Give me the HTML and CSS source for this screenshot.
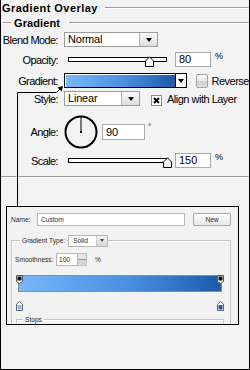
FILE: index.html
```html
<!DOCTYPE html>
<html lang="en">
<head>
  <meta charset="UTF-8">
  <title>Gradient Overlay</title>
  <link rel="stylesheet" href="styles.css">
</head>
<body>
  <div class="panel">
    <div class="title">Gradient Overlay</div>
    <div class="sub"><span>Gradient</span></div>

    <div class="row first">
      <span class="lbl">Blend Mode:</span>
      <div class="select wide"><span class="stext">Normal</span><span class="sbtn"><i class="tri"></i></span></div>
    </div>

    <div class="row gap5">
      <span class="lbl">Opacity:</span>
      <div class="slider">
        <div class="track"></div>
        <svg class="thumb" style="left: 77px" width="9" height="11" viewBox="0 0 9 11"><path d="M0.5 10.5V5L4.5 0.8L8.5 5V10.5Z" fill="#fff" stroke="#000"/></svg>
      </div>
      <div class="num">80</div>
      <span class="unit">%</span>
    </div>

    <div class="row gap6">
      <span class="lbl">Gradient:</span>
      <div class="gbar"><div class="gfill"></div><div class="garrow"><i class="tri"></i></div></div>
      <span class="check-mac"></span>
      <span class="ctext">Reverse</span>
    </div>

    <div class="row gap3">
      <span class="lbl">Style:</span>
      <div class="select narrow"><span class="stext">Linear</span><span class="sbtn"><i class="tri"></i></span></div>
      <svg class="check" width="11" height="11" viewBox="0 0 11 11"><rect x="0.5" y="0.5" width="10" height="10" fill="#fff" stroke="#8a8a8a"/><path d="M3 3L8 8M8 3L3 8" stroke="#000" stroke-width="2"/></svg>
      <span class="ctext align">Align with Layer</span>
    </div>

    <div class="row angle">
      <span class="lbl">Angle:</span>
      <svg class="dial" width="34" height="34" viewBox="0 0 34 34"><circle cx="17" cy="17" r="15.5" fill="none" stroke="#000" stroke-width="2"/><path d="M17 17V2" stroke="#000"/><rect x="16" y="16" width="2" height="2" fill="#000"/></svg>
      <div class="num deg">90</div>
      <span class="degsym">°</span>
    </div>

    <div class="row gap4">
      <span class="lbl">Scale:</span>
      <div class="slider">
        <div class="track"></div>
        <svg class="thumb" style="left: 95px" width="9" height="11" viewBox="0 0 9 11"><path d="M0.5 10.5V5L4.5 0.8L8.5 5V10.5Z" fill="#fff" stroke="#000"/></svg>
      </div>
      <div class="num">150</div>
      <span class="unit">%</span>
    </div>

    <div class="divider"></div>

    <div class="inset">
      <div class="irow">
        <span class="ilbl">Name:</span>
        <div class="iinput">Custom</div>
        <div class="ibtn">New</div>
      </div>

      <div class="grp">
        <div class="ghead">
          <span class="glbl">Gradient Type:</span>
          <div class="isel"><span class="stext">Solid</span><span class="ibtn-arrow"><i class="tri small"></i></span></div>
        </div>
        <div class="irow smooth">
          <span class="ilbl long">Smoothness:</span>
          <div class="iinput short">100</div>
          <span class="stepper"></span>
          <span class="iunit">%</span>
        </div>

        <div class="editor">
          <svg class="stop top" style="left: 0" width="7" height="9" viewBox="0 0 7 9"><path d="M0.5 0.5H6.5V6.5L3.5 8.5L0.5 6.5Z" fill="#fff" stroke="#555"/><rect x="1.5" y="1.5" width="4" height="4" fill="#111"/></svg>
          <svg class="stop top" style="left: 201px" width="7" height="9" viewBox="0 0 7 9"><path d="M0.5 0.5H6.5V6.5L3.5 8.5L0.5 6.5Z" fill="#fff" stroke="#555"/><rect x="1.5" y="1.5" width="4" height="4" fill="#111"/></svg>
          <div class="ebar"></div>
          <svg class="stop bottom" style="left: 0" width="7" height="10" viewBox="0 0 7 10"><path d="M0.5 9.5V3L3.5 0.5L6.5 3V9.5Z" fill="#fff" stroke="#666"/><rect x="1.5" y="4" width="4" height="4.5" fill="#7db7f5"/></svg>
          <svg class="stop bottom" style="left: 201px" width="7" height="10" viewBox="0 0 7 10"><path d="M0.5 9.5V3L3.5 0.5L6.5 3V9.5Z" fill="#fff" stroke="#666"/><rect x="1.5" y="4" width="4" height="4.5" fill="#1d5cb0"/></svg>
        </div>

        <div class="stops">
          <div class="ghead"><span class="glbl">Stops</span></div>
        </div>
      </div>
    </div>

    <svg class="callout" width="70" height="210" viewBox="0 0 70 210"><path d="M17.5 207V92.5H56.5L60 89" fill="none" stroke="#000"/><path d="M63 86L57.5 87.5L61.5 91.5Z" fill="#000"/></svg>
  </div>
</body>
</html>
```

FILE: styles.css
```css
* { box-sizing: border-box; }

body {
  margin: 0;
  background: #f3f3f3;
  font-family: "Liberation Sans", Arial, sans-serif;
  font-size: 11px;
  color: #000;
}

.panel {
  position: relative;
  width: 250px;
  height: 370px;
  border: 1px solid #000;
  border-top: none;
  background: #f3f3f3;
  overflow: hidden;
}

/* Headings */
.title {
  display: flex;
  align-items: center;
  height: 15px;
  padding-left: 1px;
  font-weight: bold;
  letter-spacing: 0.45px;
}

.title::after,
.sub::after,
.sub::before {
  content: "";
  flex: 1;
  border-top: 1px solid #9c9c9c;
  border-bottom: 1px solid #fff;
}

.title::after { margin-left: 7px; }

.sub {
  display: flex;
  align-items: center;
  height: 15px;
  font-weight: bold;
  letter-spacing: 0.1px;
}

.sub::before {
  flex: none;
  width: 8px;
  margin-left: 2px;
}

.sub span { margin-left: 3px; }
.sub::after { margin-left: 9px; }

/* Rows */
.row {
  display: flex;
  align-items: center;
  height: 15px;
}

.row.first { margin-top: 2px; }
.row.gap3 { margin-top: 3px; }
.row.gap4 { margin-top: 4px; }
.row.gap5 { margin-top: 5px; }
.row.gap6 { margin-top: 6px; }

.lbl {
  flex: none;
  width: 58px;
  padding-right: 1px;
  text-align: right;
  letter-spacing: -0.6px;
  white-space: nowrap;
}

.select {
  display: flex;
  height: 15px;
  margin-left: 5px;
  border: 1px solid #9c9c9c;
  background: #fff;
}

.select.wide { width: 94px; }
.select.narrow { width: 76px; }

.stext {
  flex: 1;
  padding-left: 3px;
  line-height: 13px;
  letter-spacing: -0.2px;
}

.sbtn {
  display: flex;
  align-items: center;
  justify-content: center;
  width: 18px;
  border-left: 1px solid #b4b4b4;
  background: linear-gradient(#fbfbfb, #dedede);
}

.tri {
  display: block;
  width: 0;
  height: 0;
  border-left: 3px solid transparent;
  border-right: 3px solid transparent;
  border-top: 4px solid #000;
}

.tri.small {
  border-left-width: 2px;
  border-right-width: 2px;
  border-top-width: 3px;
  border-top-color: #444;
}

/* Sliders */
.slider {
  position: relative;
  display: flex;
  align-items: center;
  width: 99px;
  height: 15px;
  margin-left: 9px;
}

.track {
  width: 100%;
  height: 5px;
  border: 1px solid #000;
  background: #fff;
}

.thumb {
  position: absolute;
  top: 4px;
}

.num {
  width: 36px;
  height: 15px;
  margin-left: 8px;
  padding-left: 3px;
  border: 1px solid #a4abb2;
  background: #fff;
  line-height: 13px;
}

.unit {
  margin-left: 4px;
  font-size: 9px;
  align-self: flex-start;
  margin-top: -1px;
}

/* Gradient preview */
.gbar {
  display: flex;
  width: 124px;
  height: 15px;
  margin-left: 5px;
  border: 1px solid #000;
  background: #fff;
}

.gfill {
  flex: 1;
  margin: 1px 0 0 1px;
  background: linear-gradient(to right, #79b7f9, #4a8ee0 55%, #1c5aaa);
}

.garrow {
  display: flex;
  align-items: center;
  justify-content: center;
  width: 11px;
  border-left: 1px solid #000;
}

.check-mac {
  width: 12px;
  height: 14px;
  margin-left: 9px;
  border: 1px solid #a2a2a2;
  border-radius: 2px;
  background: linear-gradient(#fdfdfd, #ececec 45%, #cfcfcf 55%, #e2e2e2);
}

.ctext {
  margin-left: 4px;
  letter-spacing: -0.5px;
}

.check {
  margin-left: 11px;
  margin-top: 3px;
}

.ctext.align { margin-left: 5px; }

/* Angle */
.row.angle {
  height: 34px;
  margin-top: 9px;
}

.dial { margin-left: 5px; }

.num.deg {
  width: 43px;
  height: 16px;
  margin-left: 4px;
  line-height: 14px;
}

.degsym {
  align-self: flex-start;
  margin: 7px 0 0 3px;
  font-size: 8px;
}

.divider {
  margin-top: 8px;
  border-top: 1px solid #9c9c9c;
  border-bottom: 1px solid #fff;
}

/* Gradient editor inset */
.inset {
  width: 233px;
  height: 119px;
  margin: 28px 0 0 5px;
  border: 1px solid #000;
  background: #f2f2f2;
  overflow: hidden;
  font-size: 6.6px;
  color: #2a2a2a;
}

.irow {
  display: flex;
  align-items: center;
  height: 13px;
  margin: 6px 0 0 4px;
}

.ilbl {
  flex: none;
  width: 26px;
}

.ilbl.long { width: 41px; }

.iinput {
  width: 148px;
  height: 13px;
  padding-left: 3px;
  border: 1px solid #b8b8b8;
  background: #fff;
  line-height: 11px;
}

.iinput.short {
  width: 22px;
  padding-left: 2px;
}

.ibtn {
  width: 38px;
  height: 13px;
  margin-left: 8px;
  border: 1px solid #a8a8a8;
  border-radius: 1px;
  background: linear-gradient(#fff, #e6e6e6);
  text-align: center;
  line-height: 11px;
}

.grp {
  width: 220px;
  height: 120px;
  margin: 14px 0 0 4px;
  border: 1px solid #c6c6c6;
  border-bottom: none;
  box-shadow: inset 1px 1px 0 #fff;
}

.ghead {
  display: flex;
  align-items: center;
  height: 13px;
  margin: -7px 0 0 8px;
}

.glbl {
  padding: 0 2px;
  background: #f2f2f2;
}

.isel {
  display: flex;
  width: 40px;
  height: 12px;
  margin-left: 1px;
  border: 1px solid #b8b8b8;
  background: #fff;
}

.isel .stext {
  padding-left: 4px;
  line-height: 10px;
  letter-spacing: 0;
}

.ibtn-arrow {
  display: flex;
  align-items: center;
  justify-content: center;
  width: 11px;
  border-left: 1px solid #c8c8c8;
  background: linear-gradient(#f6f6f6, #d8d8d8);
}

.grp .ghead .isel { margin-right: 2px; }

.smooth { margin: 6px 0 0 3px; }

.stepper {
  width: 9px;
  height: 13px;
  border: 1px solid #c0c0c0;
  border-left: none;
  background: linear-gradient(#e4e4e4 45%, #999 45%, #999 55%, #d6d6d6 55%);
}

.iunit { margin-left: 8px; }

.editor {
  position: relative;
  width: 208px;
  height: 36px;
  margin: 4px 0 0 4px;
}

.ebar {
  width: 204px;
  height: 17px;
  margin: 9px 0 0 2px;
  border: 1px solid #8c8c8c;
  background: linear-gradient(to right, #79b7f9, #4a8ee0 55%, #1c5aaa);
}

.stop { position: absolute; }
.stop.top { top: 0; }
.stop.bottom { top: 26px; }

.stops {
  width: 208px;
  height: 30px;
  margin: 8px 0 0 4px;
  border: 1px solid #c6c6c6;
  border-bottom: none;
  box-shadow: inset 1px 1px 0 #fff;
}

.stops .ghead { margin-left: 6px; }

.callout {
  position: absolute;
  left: -1px;
  top: 0;
  pointer-events: none;
}
```
